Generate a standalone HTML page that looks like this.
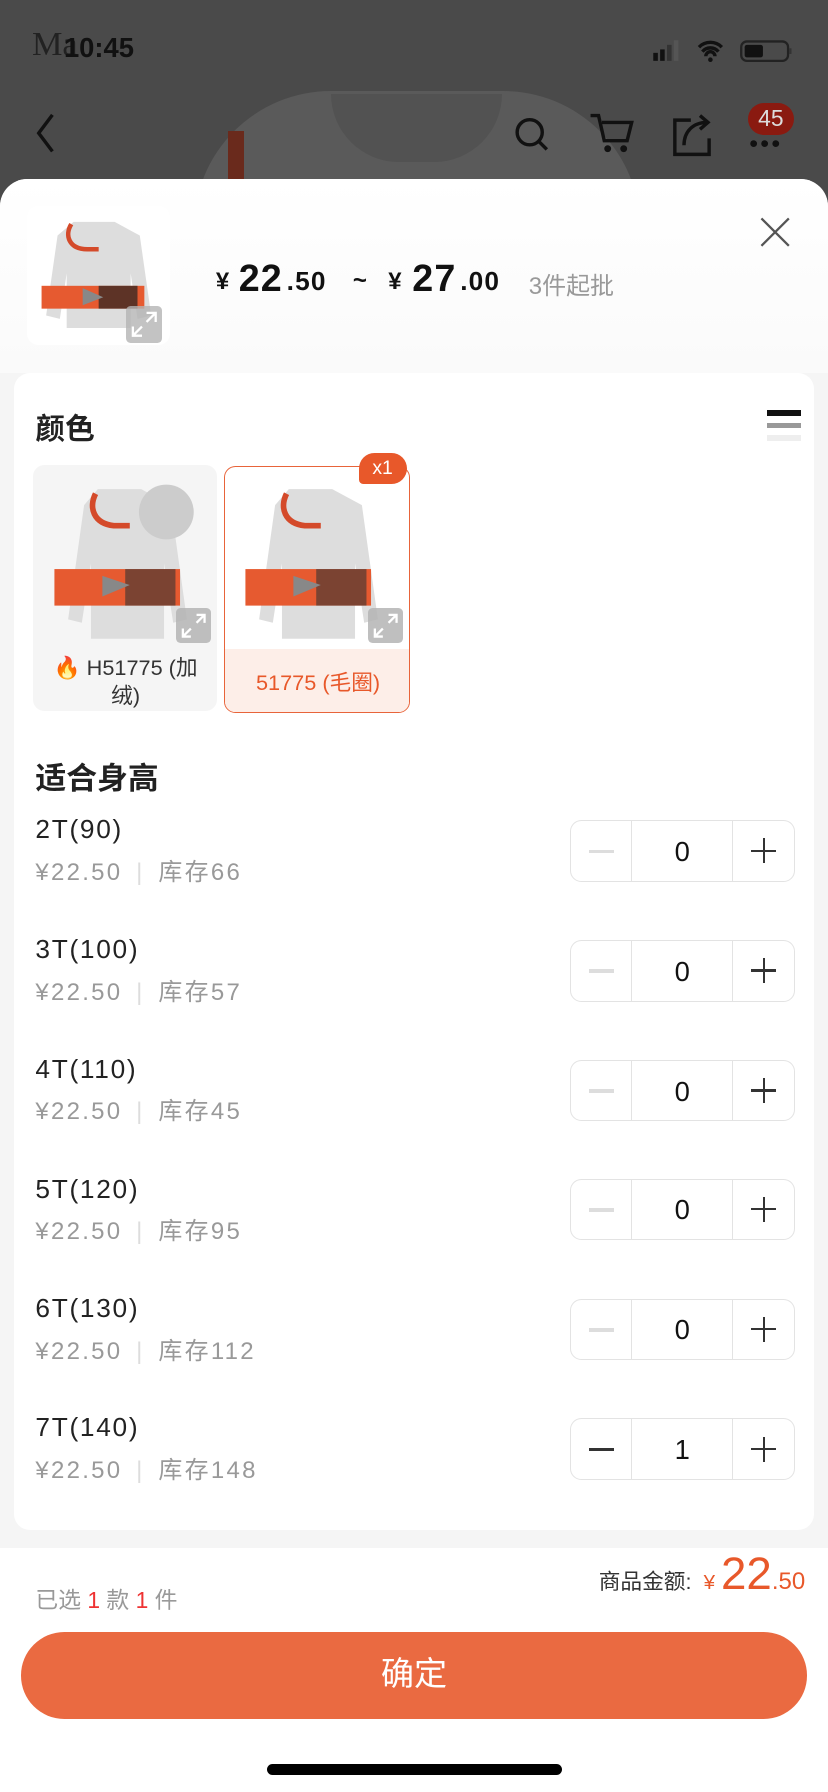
<!DOCTYPE html>
<html><head><meta charset="utf-8"><style>
*{margin:0;padding:0;box-sizing:border-box}
html,body{width:828px;height:1792px;overflow:hidden;background:#fff}
#w{zoom:1.14207;width:725px;height:1569px;position:relative;font-family:"Liberation Sans","Noto Sans CJK SC",sans-serif;color:#222}
.a{position:absolute;white-space:nowrap}
.row .n{position:absolute;left:31px;font-size:23px;letter-spacing:1.5px;color:#222}
.row .p{position:absolute;left:31px;font-size:21px;letter-spacing:2px;color:#999}
.row .p span{letter-spacing:0;margin:0 14px 0 12px}
.st{position:absolute;left:499px;width:197px;height:54px;border:1px solid #e3e3e3;border-radius:10px;background:#fff}
.st .d1{position:absolute;left:53px;top:0;bottom:0;border-left:1px solid #e3e3e3}
.st .d2{position:absolute;left:141px;top:0;bottom:0;border-left:1px solid #e3e3e3}
.st .m{position:absolute;left:16px;top:25px;width:22px;height:3px;background:#ddd}
.st .v{position:absolute;left:54px;width:87px;top:13px;text-align:center;font-size:24px;color:#111}
.st .pl1{position:absolute;left:158px;top:25px;width:22px;height:2px;background:#333}
.st .pl2{position:absolute;left:168px;top:15px;width:2px;height:22px;background:#333}
.hp{position:absolute;font-weight:bold;color:#111}
</style></head><body><div id="w">
<div class="a" style="left:0;top:0;width:725px;height:200px;background:#4a4a4a"></div>
<div class="a" style="left:170px;top:80px;width:390px;height:120px;background:#5a5a5a;border-radius:120px 120px 0 0"></div>
<div class="a" style="left:290px;top:82px;width:150px;height:60px;background:#525252;border-radius:0 0 75px 75px"></div>
<div class="a" style="left:200px;top:115px;width:14px;height:50px;background:#6a2a1c"></div>
<div class="a" style="left:28px;top:22px;font-size:30px;font-family:'Liberation Serif',serif;color:#222">Ma</div>
<div class="a" style="left:56px;top:28px;font-size:24px;font-weight:bold;color:#111">10:45</div>
<svg class="a" style="left:570px;top:33px" width="125" height="22"><rect x="2" y="13" width="4" height="7" fill="#111"/><rect x="8" y="10" width="4" height="10" fill="#111"/><rect x="14" y="6" width="4" height="14" fill="#333"/><rect x="20" y="2" width="4" height="18" fill="#555"/>
<path d="M42 8a14 14 0 0 1 20 0M45 12a9 9 0 0 1 14 0M48 16a4 4 0 0 1 8 0" stroke="#111" stroke-width="3" fill="none"/><circle cx="52" cy="19" r="2" fill="#111"/>
<rect x="79" y="3" width="41" height="17" rx="5" stroke="#222" stroke-width="2" fill="none"/><rect x="82" y="6" width="16" height="11" rx="2" fill="#111"/><rect x="121" y="9" width="2" height="5" fill="#333"/></svg>
<svg class="a" style="left:22px;top:95px" width="40" height="45"><path d="M24 6L12 22l12 16" stroke="#111" stroke-width="3" fill="none"/></svg>
<svg class="a" style="left:445px;top:100px" width="40" height="40"><circle cx="19" cy="16" r="11" stroke="#111" stroke-width="3" fill="none"/><path d="M27 24l7 7" stroke="#111" stroke-width="3"/></svg>
<svg class="a" style="left:513px;top:97px" width="45" height="45"><path d="M4 4h7l5 22h20l4-16H14" stroke="#111" stroke-width="3" fill="none"/><circle cx="19" cy="33" r="3" fill="#111"/><circle cx="33" cy="33" r="3" fill="#111"/></svg>
<svg class="a" style="left:585px;top:97px" width="45" height="45"><path d="M20 8H6v30h30V24" stroke="#111" stroke-width="3" fill="none"/><path d="M14 30c0-12 8-20 20-20M28 4l7 6-7 6" stroke="#111" stroke-width="3" fill="none"/></svg>
<div class="a" style="left:655px;top:90px;width:40px;height:28px;border-radius:14px;background:#8a1a10;color:#ddd;font-size:20px;text-align:center;line-height:28px">45</div>
<div class="a" style="left:656px;top:114px;font-size:22px;color:#111;letter-spacing:2px">•••</div>
<div class="a" style="left:0;top:157px;width:725px;height:1412px;background:#f5f5f5;border-radius:24px 24px 0 0;overflow:hidden">
 <div class="a" style="left:0;top:0;width:725px;height:170px;background:linear-gradient(#fff,#fafafa)"></div>
</div>
<div class="a" style="left:24px;top:180px;width:125px;height:122px;background:#fff;border-radius:10px"></div>
<svg class="a" style="left:32px;top:188px" width="110" height="110" viewBox="0 0 110 110"><path d="M32 6h36l22 12 10 70-12 3-6-40v48H26V51l-6 40-12-3 10-70z" fill="#ddd"/><path d="M30 8c-6 10-2 22 14 22h10" stroke="#d44a2a" stroke-width="4" fill="none"/><rect x="4" y="62" width="90" height="20" fill="#e65a30"/><rect x="54" y="62" width="34" height="20" fill="#222" opacity=".7"/><path d="M40 64l18 8-18 7z" fill="#888"/></svg>
<div class="a" style="left:110px;top:268px;width:32px;height:32px;background:rgba(180,180,180,.8);border-radius:4px"></div>
<svg class="a" style="left:110px;top:268px" width="32" height="32"><path d="M18 6h8v8M26 6l-8 8M6 18v8h8M6 26l8-8" stroke="#fff" stroke-width="2" fill="none"/></svg>
<div class="hp" style="left:189px;top:235px;font-size:21px">¥</div>
<div class="hp" style="left:209px;top:225px;font-size:33px;letter-spacing:1px">22</div>
<div class="hp" style="left:251px;top:233px;font-size:23px;letter-spacing:1px">.50</div>
<div class="hp" style="left:309px;top:234px;font-size:21px">~</div>
<div class="hp" style="left:340px;top:235px;font-size:21px">¥</div>
<div class="hp" style="left:361px;top:225px;font-size:33px;letter-spacing:1px">27</div>
<div class="hp" style="left:403px;top:233px;font-size:23px;letter-spacing:1px">.00</div>
<div class="a" style="left:463px;top:233px;font-size:21px;color:#999">3件起批</div>
<svg class="a" style="left:664px;top:188px" width="30" height="30"><path d="M3 3l24 24M27 3L3 27" stroke="#555" stroke-width="2"/></svg>
<div class="a" style="left:12px;top:327px;width:701px;height:1013px;background:#fff;border-radius:14px"></div>
<div class="a" style="left:31px;top:355px;font-size:26px;font-weight:bold;color:#222">颜色</div>
<div class="a" style="left:672px;top:359px;width:29px;height:5px;background:#111"></div>
<div class="a" style="left:672px;top:370px;width:29px;height:5px;background:#999"></div>
<div class="a" style="left:672px;top:381px;width:29px;height:5px;background:#eee"></div>
<div class="a" style="left:29px;top:407px;width:161px;height:216px;background:#f5f5f5;border-radius:10px"></div>
<div class="a" style="left:196px;top:408px;width:163px;height:216px;border:1.5px solid #e8643a;border-radius:10px;background:#fff;overflow:hidden"><div class="a" style="left:0;top:159px;width:163px;height:60px;background:#fdeee8"></div></div>
<svg class="a" style="left:38px;top:420px" width="140" height="140" viewBox="0 0 140 140"><path d="M48 8h38l26 14 14 100-12 3-8-52v66H42V73l-8 52-12-3 14-100z" fill="#ddd"/><circle cx="108" cy="28" r="24" fill="#ccc"/><path d="M46 12c-6 12-2 26 16 28h14" stroke="#d44a2a" stroke-width="5" fill="none"/><rect x="10" y="78" width="110" height="32" fill="#e65a30"/><rect x="72" y="78" width="44" height="32" fill="#333" opacity=".6"/><path d="M52 84l24 8-24 10z" fill="#888"/></svg>
<svg class="a" style="left:205px;top:420px" width="140" height="140" viewBox="0 0 140 140"><path d="M48 8h38l26 14 14 100-12 3-8-52v66H42V73l-8 52-12-3 14-100z" fill="#ddd"/><path d="M46 12c-6 12-2 26 16 28h14" stroke="#d44a2a" stroke-width="5" fill="none"/><rect x="10" y="78" width="110" height="32" fill="#e65a30"/><rect x="72" y="78" width="44" height="32" fill="#333" opacity=".6"/><path d="M52 84l24 8-24 10z" fill="#888"/></svg>
<div class="a" style="left:154px;top:532px;width:31px;height:31px;background:rgba(180,180,180,.85);border-radius:4px"></div>
<div class="a" style="left:322px;top:532px;width:31px;height:31px;background:rgba(180,180,180,.85);border-radius:4px"></div>
<svg class="a" style="left:154px;top:532px" width="31" height="31"><path d="M18 6h7v7M25 6l-7 7M6 18v7h7M6 25l7-7" stroke="#fff" stroke-width="2" fill="none"/></svg>
<svg class="a" style="left:322px;top:532px" width="31" height="31"><path d="M18 6h7v7M25 6l-7 7M6 18v7h7M6 25l7-7" stroke="#fff" stroke-width="2" fill="none"/></svg>
<div class="a" style="left:314px;top:397px;width:42px;height:27px;background:#e8582a;border-radius:14px 14px 14px 4px;color:#fff;font-size:17px;text-align:center;line-height:27px">x1</div>
<div class="a" style="left:30px;top:573px;width:160px;text-align:center;font-size:19px;line-height:24px;color:#333;white-space:normal"><span style="color:#f0602a">🔥</span> H51775 (加<br>绒)</div>
<div class="a" style="left:197px;top:583px;width:163px;text-align:center;font-size:19px;color:#e8582a">51775 (毛圈)</div>
<div class="a" style="left:31px;top:659px;font-size:27px;font-weight:bold;color:#222">适合身高</div>
<div class="row">
<div class="n" style="top:713px">2T(90)</div><div class="p" style="top:746px">¥22.50<span style="color:#ddd">|</span>库存66</div>
<div class="st" style="top:718px"><div class="d1"></div><div class="d2"></div><div class="m"></div><div class="v">0</div><div class="pl1"></div><div class="pl2"></div></div>
<div class="n" style="top:818px">3T(100)</div><div class="p" style="top:851px">¥22.50<span style="color:#ddd">|</span>库存57</div>
<div class="st" style="top:823px"><div class="d1"></div><div class="d2"></div><div class="m"></div><div class="v">0</div><div class="pl1"></div><div class="pl2"></div></div>
<div class="n" style="top:923px">4T(110)</div><div class="p" style="top:955px">¥22.50<span style="color:#ddd">|</span>库存45</div>
<div class="st" style="top:928px"><div class="d1"></div><div class="d2"></div><div class="m"></div><div class="v">0</div><div class="pl1"></div><div class="pl2"></div></div>
<div class="n" style="top:1028px">5T(120)</div><div class="p" style="top:1060px">¥22.50<span style="color:#ddd">|</span>库存95</div>
<div class="st" style="top:1032px"><div class="d1"></div><div class="d2"></div><div class="m"></div><div class="v">0</div><div class="pl1"></div><div class="pl2"></div></div>
<div class="n" style="top:1132px">6T(130)</div><div class="p" style="top:1165px">¥22.50<span style="color:#ddd">|</span>库存112</div>
<div class="st" style="top:1137px"><div class="d1"></div><div class="d2"></div><div class="m"></div><div class="v">0</div><div class="pl1"></div><div class="pl2"></div></div>
<div class="n" style="top:1236px">7T(140)</div><div class="p" style="top:1270px">¥22.50<span style="color:#ddd">|</span>库存148</div>
<div class="st" style="top:1242px"><div class="d1"></div><div class="d2"></div><div class="m" style="background:#333"></div><div class="v">1</div><div class="pl1"></div><div class="pl2"></div></div>
</div>
<div class="a" style="left:0;top:1355px;width:725px;height:214px;background:#fff"></div>
<div class="a" style="left:31px;top:1385px;font-size:20px;color:#999">已选 <span style="color:#e33">1</span> 款 <span style="color:#e33">1</span> 件</div>
<div class="a" style="right:20px;top:1355px;color:#333;font-size:19px">商品金额: &nbsp;<span style="color:#e8582a;font-size:18px">¥</span> <span style="color:#e8582a;font-size:40px">22</span><span style="color:#e8582a;font-size:21px">.50</span></div>
<div class="a" style="left:18px;top:1429px;width:689px;height:76px;background:#ea6a41;border-radius:38px;color:#fff;font-size:29px;text-align:center;line-height:76px">确定</div>
<div class="a" style="left:234px;top:1545px;width:258px;height:9px;background:#000;border-radius:5px"></div>
</div></body></html>
